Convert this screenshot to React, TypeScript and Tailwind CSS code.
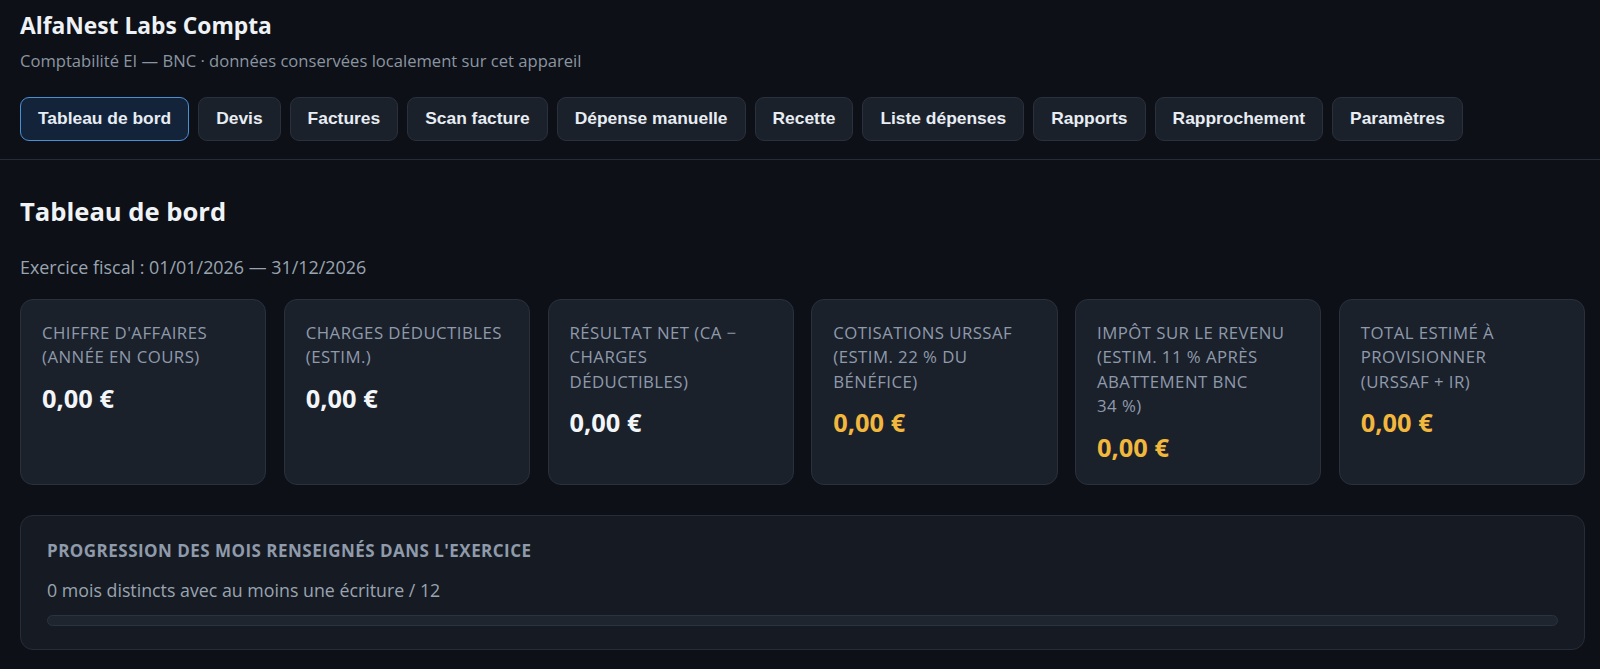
import React from "react"

const tabs = [
  "Tableau de bord",
  "Devis",
  "Factures",
  "Scan facture",
  "Dépense manuelle",
  "Recette",
  "Liste dépenses",
  "Rapports",
  "Rapprochement",
  "Paramètres",
]

// label lines are split the way the card width wraps them
const stats = [
  { lines: ["Chiffre d'affaires", "(année en cours)"], value: "0,00 €", accent: false },
  { lines: ["Charges déductibles", "(estim.)"], value: "0,00 €", accent: false },
  { lines: ["Résultat net (CA −", "charges", "déductibles)"], value: "0,00 €", accent: false },
  { lines: ["Cotisations URSSAF", "(estim. 22 % du", "bénéfice)"], value: "0,00 €", accent: true },
  { lines: ["Impôt sur le revenu", "(estim. 11 % après", "abattement BNC", "34 %)"], value: "0,00 €", accent: true },
  { lines: ["Total estimé à", "provisionner", "(URSSAF + IR)"], value: "0,00 €", accent: true },
]

function NavTab({ label, active }: { label: string; active: boolean }) {
  return (
    <button
      className={
        active
          ? "h-[44px] rounded-[9px] border border-[#4b8fd3] bg-[#13243a] px-[17px] font-['Liberation_Sans',Arial,sans-serif] text-[17.42px] font-bold text-[#e8edf3]"
          : "h-[44px] rounded-[9px] border border-[#2a313c] bg-[#1b212b] px-[17px] font-['Liberation_Sans',Arial,sans-serif] text-[17.42px] font-bold text-[#e8edf3]"
      }
    >
      {label}
    </button>
  )
}

function StatCard({ lines, value, accent }: { lines: string[]; value: string; accent: boolean }) {
  return (
    <div className="rounded-[13px] border border-[#2a313c] bg-[#1b212b] p-[21px]">
      <div className="text-[16.8px] uppercase leading-[24.5px] tracking-[0.45px] text-[#8f9aab]">
        {lines.map((l) => (
          <div key={l} className="whitespace-nowrap">
            {l}
          </div>
        ))}
      </div>
      <div
        className={
          accent
            ? "mt-[12px] text-[25.4px] font-bold leading-[32px] text-[#f2b73d]"
            : "mt-[12px] text-[25.4px] font-bold leading-[32px] text-[#f3f6f9]"
        }
      >
        {value}
      </div>
    </div>
  )
}

export default function App() {
  return (
    <div className="min-h-screen bg-[#0d1016] font-['Open_Sans','Noto_Sans',sans-serif] text-[#e6edf3]">
      <header className="border-b border-[#262d38] pb-[18px] pl-5 pr-[15px] pt-[10px]">
        <h1 className="text-[22.8px] font-bold leading-[31px] text-[#eef2f6]">AlfaNest Labs Compta</h1>
        <p className="mt-[8px] text-[16.6px] leading-[24px] text-[#8b95a2]">
          Comptabilité EI — BNC · données conservées localement sur cet appareil
        </p>
        <nav className="mt-[23.5px] flex flex-wrap gap-[9px]">
          {tabs.map((t, i) => (
            <NavTab key={t} label={t} active={i === 0} />
          ))}
        </nav>
      </header>

      <main className="pb-[19px] pl-5 pr-[15px] pt-[35px]">
        <h2 className="text-[25.6px] font-bold leading-[34px] text-[#f0f3f6]">Tableau de bord</h2>
        <p className="mt-[26px] text-[17.9px] leading-[24px] text-[#9aa4b1]">
          Exercice fiscal : 01/01/2026 — 31/12/2026
        </p>

        <div className="mt-[20px] grid grid-cols-6 gap-[17.5px]">
          {stats.map((s) => (
            <StatCard key={s.lines[0]} lines={s.lines} value={s.value} accent={s.accent} />
          ))}
        </div>

        <section className="mt-[30px] rounded-[13px] border border-[#262d38] bg-[#161b23] px-[26px] pb-[23px] pt-[24px]">
          <div className="text-[17px] font-bold uppercase leading-[22px] tracking-[0.47px] text-[#8f9aab]">
            Progression des mois renseignés dans l'exercice
          </div>
          <div className="mt-[16px] text-[17.8px] leading-[24px] text-[#9aa4b1]">
            0 mois distincts avec au moins une écriture / 12
          </div>
          <div className="mt-[13px] h-[11px] rounded-full border border-[#2b3340] bg-[#1e252f]" />
        </section>
      </main>
    </div>
  )
}
